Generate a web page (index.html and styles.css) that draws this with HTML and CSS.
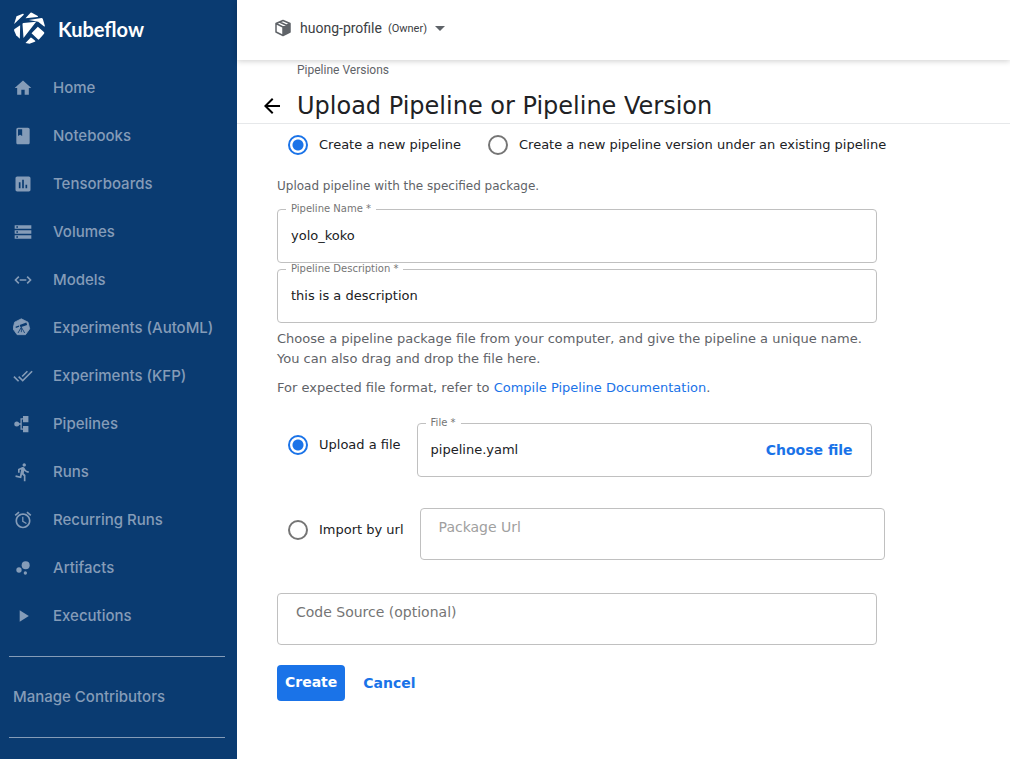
FILE: index.html
```html
<!DOCTYPE html>
<html lang="en">
<head>
<meta charset="utf-8">
<title>Kubeflow – Upload Pipeline</title>
<link rel="stylesheet" href="styles.css">
</head>
<body>
<div class="app">
  <aside class="sidebar">
    <a class="brand" href="#">
      <svg class="brand-logo" viewBox="0 0 96 96" aria-hidden="true">
        <path d="M36 19 51 2q2-1 4 0l18 10q2 2-1 3z"/>
        <path d="M2 36 9 13 28 5q5 0 2 4z"/>
        <path d="M2 52 20 40 19 80 8 70 2 56z"/>
        <path d="M27 37q0-4 3-4L68 29 30 78z"/>
        <path d="M46 24 84 18q3 0 4 3l6 20q0 4-3 2L74 29z"/>
        <path d="M73 44 92 61q1 3-1 5L77 82q-2 2-4 0L54 64z"/>
        <path d="M36 93 51 77q2-1 4 1l10 8q2 2-1 3l-16 6z"/>
      </svg>
      <span class="brand-name">Kubeflow</span>
    </a>
    <nav class="nav">
      <a class="nav-item" href="#"><svg class="nav-icon" viewBox="0 0 24 24"><path d="M10 20v-6h4v6h5v-8h3L12 3 2 12h3v8z"/></svg>Home</a>
      <a class="nav-item" href="#"><svg class="nav-icon" viewBox="0 0 24 24"><path d="M18 2H6c-1.100 0-2 .9-2 2v16c0 1.100.9 2 2 2h12c1.100 0 2-.9 2-2V4c0-1.100-.9-2-2-2zM6 4h5v8l-2.500-1.500L6 12V4z"/></svg>Notebooks</a>
      <a class="nav-item" href="#"><svg class="nav-icon" viewBox="0 0 24 24"><path d="M19 3H5c-1.100 0-2 .9-2 2v14c0 1.100.9 2 2 2h14c1.100 0 2-.9 2-2V5c0-1.100-.9-2-2-2zM9 17H7v-7h2v7zm4 0h-2V7h2v10zm4 0h-2v-4h2v4z"/></svg>Tensorboards</a>
      <a class="nav-item" href="#"><svg class="nav-icon" viewBox="0 0 24 24"><path d="M2 20h20v-4H2v4zm2-3h2v2H4v-2zM2 4v4h20V4H2zm4 3H4V5h2v2zm-4 7h20v-4H2v4zm2-3h2v2H4v-2z"/></svg>Volumes</a>
      <a class="nav-item" href="#"><svg class="nav-icon" viewBox="0 0 24 24"><path class="nav-icon-line" d="M7 8 3 12l4 4M17 8l4 4-4 4M8 12h8"/></svg>Models</a>
      <a class="nav-item" href="#"><svg class="nav-icon" viewBox="0 0 24 24"><path d="M10 1 18 5 20 13 15 20H5L0 13 2 5z" stroke="currentColor" stroke-linejoin="round"/><path class="nav-icon-cut" d="M3 10.500 7 9l.5 1.500L3.500 12zM8 8.500 16 5.500l1 3L9 11z"/><path class="nav-icon-legs" d="M10 11 6 18M10 12v5M10 11l4 7"/></svg>Experiments (AutoML)</a>
      <a class="nav-item" href="#"><svg class="nav-icon" viewBox="0 0 24 24"><path d="m18 7-1.410-1.410-6.340 6.340 1.410 1.410L18 7zm4.240-1.410L11.660 16.170 7.480 12l-1.410 1.410L11.660 19l12-12-1.420-1.410zM.41 13.410 6 19l1.410-1.410L1.830 12 .41 13.410z"/></svg>Experiments (KFP)</a>
      <a class="nav-item" href="#"><svg class="nav-icon" viewBox="0 0 24 24"><circle cx="4.500" cy="12" r="3"/><path d="M12 2.500h6.500V10H12V6.500h-1.500v11H12V14.500h6.500V22H12v-3H9v-6H5v-2h4V5h3z"/></svg>Pipelines</a>
      <a class="nav-item" href="#"><svg class="nav-icon" viewBox="0 0 24 24"><path d="M13.490 5.480c1.100 0 2-.9 2-2s-.9-2-2-2-2 .9-2 2 .9 2 2 2zm-3.600 13.900 1-4.400 2.100 2v6h2v-7.500l-2.100-2 .6-3c1.300 1.500 3.300 2.500 5.500 2.500v-2c-1.900 0-3.500-1-4.300-2.400l-1-1.600c-.4-.6-1-1-1.700-1-.3 0-.5.1-.8.1l-5.200 2.200v4.700h2v-3.400l1.800-.7-1.600 8.100-4.900-1-.4 2 7 1.400z"/></svg>Runs</a>
      <a class="nav-item" href="#"><svg class="nav-icon" viewBox="0 0 24 24"><path d="m22 5.720-4.600-3.860-1.290 1.530 4.600 3.860L22 5.720zM7.880 3.390 6.600 1.860 2 5.710l1.290 1.530 4.590-3.850zM12.500 8H11v6l4.750 2.850.75-1.230-4-2.370V8zM12 4c-4.970 0-9 4.030-9 9s4.020 9 9 9c4.970 0 9-4.030 9-9s-4.030-9-9-9zm0 16c-3.870 0-7-3.130-7-7s3.130-7 7-7 7 3.130 7 7-3.130 7-7 7z"/></svg>Recurring Runs</a>
      <a class="nav-item" href="#"><svg class="nav-icon" viewBox="0 0 24 24"><circle cx="7.200" cy="14.400" r="3.200"/><circle cx="14.800" cy="18" r="2"/><circle cx="15.200" cy="8.800" r="4.800"/></svg>Artifacts</a>
      <a class="nav-item" href="#"><svg class="nav-icon" viewBox="0 0 24 24"><path d="M8 5v14l11-7z"/></svg>Executions</a>
      <hr class="nav-rule">
      <a class="nav-item" href="#">Manage Contributors</a>
      <hr class="nav-rule">
    </nav>
  </aside>

  <main class="main">
    <header class="topbar">
      <button class="profile" type="button">
        <svg class="profile-icon" viewBox="0 0 18 18" aria-hidden="true">
          <path class="profile-line" d="M9 1.500 16 4.500v8.500l-7 3.500-7-3.500V4.500zM2 4.500l7 3.500 7-3.500M9 8v8.500M5.500 3l7 3.300"/>
          <path d="M9 8 16 4.500V13l-7 3.500z"/>
        </svg>
        <span class="profile-name">huong-profile</span>
        <span class="profile-role">(Owner)</span>
        <svg class="profile-caret" viewBox="0 0 10 5" aria-hidden="true"><path d="M0 0h10L5 5z"/></svg>
      </button>
    </header>

    <div class="page-head">
      <a class="crumb" href="#">Pipeline Versions</a>
      <div class="title-row">
        <button class="back" type="button" aria-label="Back">
          <svg class="back-icon" viewBox="4 4 16 16"><path d="M20 11H7.830l5.590-5.590L12 4l-8 8 8 8 1.410-1.410L7.830 13H20v-2z"/></svg>
        </button>
        <h1 class="title">Upload Pipeline or Pipeline Version</h1>
      </div>
    </div>

    <form class="form">
      <div class="modes">
        <label class="choice"><input class="radio" type="radio" name="mode" checked>Create a new pipeline</label>
        <label class="choice"><input class="radio" type="radio" name="mode">Create a new pipeline version under an existing pipeline</label>
      </div>
      <p class="intro">Upload pipeline with the specified package.</p>
      <div class="fields">
        <div class="field">
          <label class="field-label" for="name">Pipeline Name *</label>
          <input class="field-input" id="name" type="text" value="yolo_koko">
        </div>
        <div class="field">
          <label class="field-label" for="description">Pipeline Description *</label>
          <input class="field-input" id="description" type="text" value="this is a description">
        </div>
      </div>
      <p class="help">Choose a pipeline package file from your computer, and give the pipeline a unique name.<br>You can also drag and drop the file here.</p>
      <p class="help">For expected file format, refer to <a class="link" href="#">Compile Pipeline Documentation</a>.</p>
      <div class="source source-file">
        <label class="choice"><input class="radio" type="radio" name="source" checked>Upload a file</label>
        <div class="field file-field">
          <label class="field-label" for="file">File *</label>
          <input class="field-input" id="file" type="text" value="pipeline.yaml" readonly>
          <button class="text-button" type="button">Choose file</button>
        </div>
      </div>
      <div class="source">
        <label class="choice"><input class="radio" type="radio" name="source">Import by url</label>
        <input class="box box-url" type="text" placeholder="Package Url" aria-label="Package Url">
      </div>
      <input class="box box-code" type="text" placeholder="Code Source (optional)" aria-label="Code Source (optional)">
      <div class="actions">
        <button class="create" type="button">Create</button>
        <button class="text-button" type="button">Cancel</button>
      </div>
    </form>
  </main>
</div>
</body>
</html>
```
FILE: styles.css
```css
* { box-sizing: border-box; }

body {
  margin: 0;
  background: #fff;
  color: #202124;
  font: 13px/20px "DejaVu Sans", sans-serif;
}

button, input { font: inherit; color: inherit; }
button { border: 0; padding: 0; background: none; cursor: pointer; }

.app { display: flex; min-height: 100vh; }

/* Sidebar */
.sidebar {
  flex: 0 0 237px;
  background: #0a3b71;
  font-family: Inter, sans-serif;
}
.brand {
  display: flex;
  align-items: center;
  gap: 12px;
  height: 56px;
  margin-bottom: 8px;
  padding-left: 13px;
  color: #fff;
  text-decoration: none;
}
.brand-logo { width: 33px; height: 32px; fill: #fff; }
.brand-name { font-family: Lato, sans-serif; font-size: 20px; font-weight: 700; line-height: 24px; padding-top: 2px; }
.nav-item {
  display: flex;
  align-items: center;
  gap: 20px;
  height: 48px;
  padding-left: 13px;
  color: #859cb8;
  font-size: 15px;
  font-weight: 500;
  text-decoration: none;
}
.nav-icon { width: 20px; height: 20px; fill: currentColor; }
.nav-icon-cut { fill: #0a3b71; }
.nav-icon-line { fill: none; stroke: currentColor; stroke-width: 2; }
.nav-icon-legs { fill: none; stroke: #0a3b71; }
.nav-rule {
  height: 1px;
  margin: 16px 12px 16px 9px;
  border: 0;
  background: #859cb8;
}

/* Top bar */
.main { flex: 1; min-width: 0; }
.topbar {
  position: relative;
  display: flex;
  align-items: center;
  height: 60px;
  padding: 0 37px 4px;
  box-shadow: 0 1px 6px rgba(0, 0, 0, .2);
}
.profile {
  display: flex;
  align-items: center;
  color: #3c4043;
  font-family: Roboto, sans-serif;
}
.profile-icon { width: 18px; height: 18px; margin-right: 8px; fill: #5f6368; }
.profile-line { fill: none; stroke: #5f6368; stroke-width: 1.500; stroke-linejoin: round; }
.profile-name { margin-right: 6px; font-size: 14px; }
.profile-role { margin-right: 8px; padding-top: 2px; font-size: 11px; }
.profile-caret { width: 10px; height: 5px; fill: #5f6368; }

/* Page heading */
.page-head { padding: 0 27px; border-bottom: 1px solid #e6e8ea; }
.crumb {
  display: block;
  padding-left: 33px;
  color: #5f6368;
  font: 12px/20px Roboto, sans-serif;
  text-decoration: none;
}
.title-row { display: flex; align-items: center; gap: 17px; padding: 10px 0 1px; }
.back { display: flex; }
.back-icon { width: 16px; height: 16px; fill: #000; }
.title { margin: 0; font-size: 24px; font-weight: 400; line-height: 32px; }

/* Form */
.form { padding: 9px 40px; }
.modes { display: flex; gap: 27px; margin-bottom: 19px; padding-left: 11px; }
.choice { display: flex; align-items: center; gap: 11px; height: 24px; color: #202124; white-space: nowrap; }
.radio {
  appearance: none;
  width: 20px;
  height: 20px;
  margin: 0;
  border: 2px solid #757575;
  border-radius: 50%;
}
.radio:checked {
  border-color: #1a73e8;
  background: radial-gradient(circle, #1a73e8 5px, transparent 6px);
}
.intro { margin: 0 0 13px; color: #5f6368; font-size: 12px; }
.fields { display: grid; gap: 6px; max-width: 600px; margin-bottom: 6px; }
.field {
  position: relative;
  display: flex;
  align-items: center;
  height: 54px;
  border: 1px solid #c0c0c0;
  border-radius: 4px;
}
.field-label {
  position: absolute;
  top: -8px;
  left: 8px;
  padding: 0 5px;
  background: linear-gradient(#fff, #fff) center / 100% 4px no-repeat;
  color: #757575;
  font-size: 10px;
  line-height: 14px;
}
.field-input {
  flex: 1;
  min-width: 0;
  padding: 0 13px;
  border: 0;
  outline: 0;
  background: none;
}
.help { margin: 0 0 9px; color: #5f6368; }
.link { color: #1a73e8; text-decoration: none; }
.source { display: flex; align-items: flex-start; gap: 16px; padding-left: 11px; }
.source-file { margin: 25px 0 31px; }
.source .choice { flex: none; margin-top: 10px; }
.file-field { flex: 0 1 455px; padding-right: 18px; }
.box {
  height: 52px;
  padding: 0 18px 14px;
  border: 1px solid #c0c0c0;
  border-radius: 4px;
  background: #fff;
  font-size: 14px;
}
.box::placeholder { color: #757575; opacity: 1; }
.box-url { flex: 0 1 465px; min-width: 0; }
.box-url::placeholder { color: #a0a0a0; }
.box-code { display: block; width: 100%; max-width: 600px; margin: 33px 0 20px; }
.actions { display: flex; align-items: center; gap: 18px; }
.text-button { color: #1a73e8; font-size: 14px; font-weight: 700; }
.create {
  height: 36px;
  padding: 0 8px 2px;
  border-radius: 4px;
  background: #1a73e8;
  color: #fff;
  font-size: 14px;
  font-weight: 700;
}
```
